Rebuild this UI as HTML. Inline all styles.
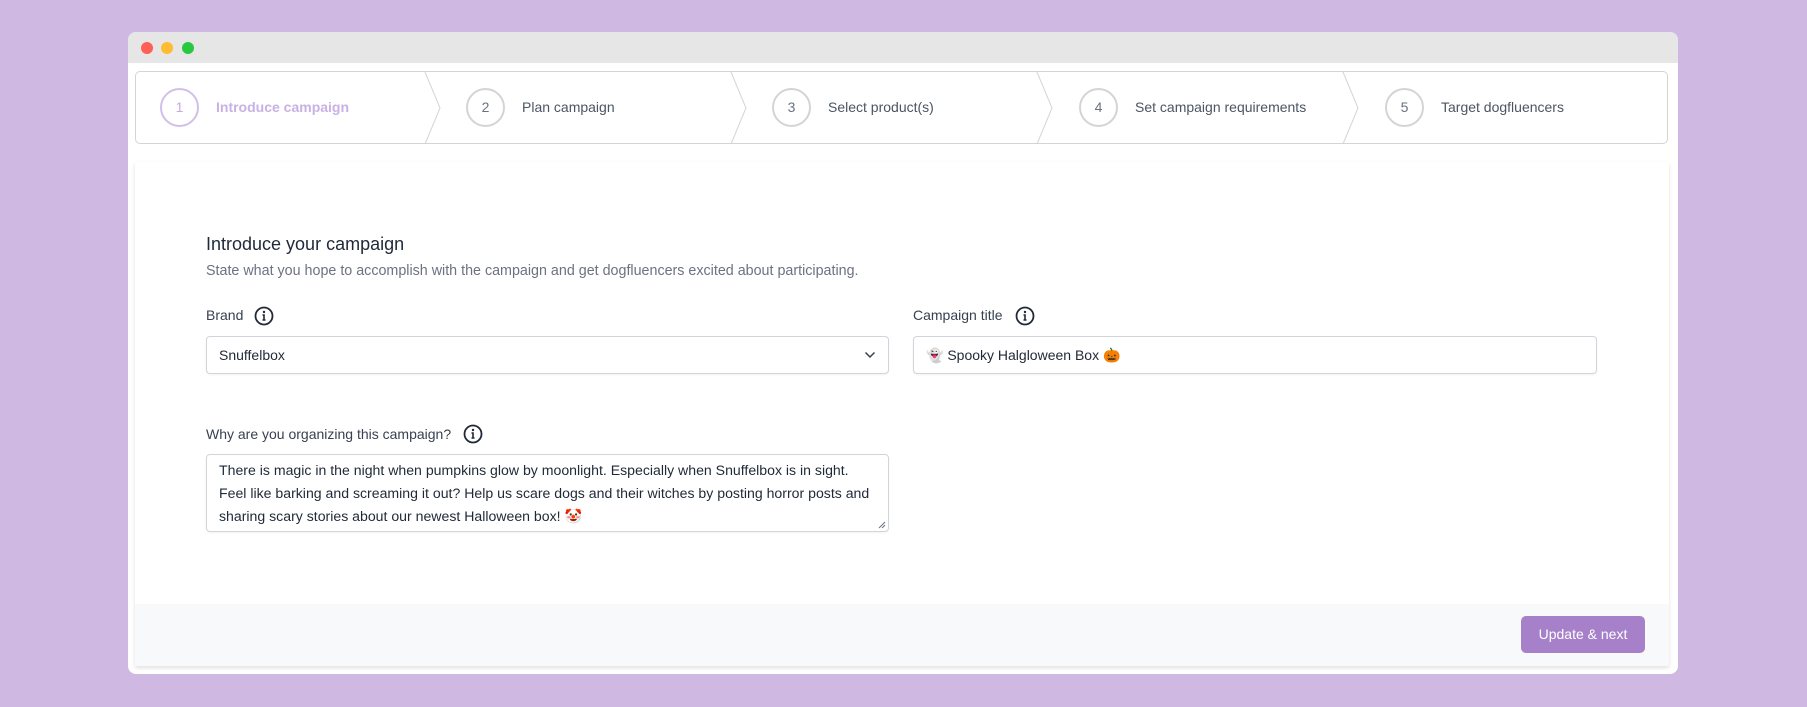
<!DOCTYPE html>
<html><head><meta charset="utf-8"><style>
*{box-sizing:border-box;margin:0;padding:0}
body{width:1807px;height:707px;background:#cfb9e3;font-family:"Liberation Sans",sans-serif;position:relative;overflow:hidden;color:#1f2937}
.win{position:absolute;left:128px;top:32px;width:1550px;height:642px;background:#fff;border-radius:8px;overflow:hidden}
.bar{position:absolute;left:0;top:0;width:100%;height:31px;background:#e6e6e6}
.dot{position:absolute;top:10px;width:12px;height:12px;border-radius:50%}
.steps{position:absolute;left:7px;top:39px;width:1533px;height:73px;border:1px solid #d4d4d8;border-radius:5px;background:#fff;overflow:hidden}
.step{position:absolute;top:0;height:71px}
.circ{position:absolute;top:16px;width:39px;height:39px;border:2px solid #d4d4d8;border-radius:50%;font-size:14px;color:#6b7280;text-align:center;line-height:35px}
.lab{position:absolute;top:27px;font-size:14px;color:#4b5563;white-space:nowrap}
.card{position:absolute;left:7px;top:130px;width:1534px;height:504px;background:#fff;box-shadow:0 2px 4px rgba(0,0,0,.12)}
.foot{position:absolute;left:0;bottom:0;width:100%;height:62px;background:#f8f9fb}
.t{position:absolute;white-space:nowrap}
.info{position:absolute;width:20px;height:20px}
.inp{position:absolute;border:1px solid #d1d5db;border-radius:4px;background:#fff;box-shadow:0 1px 2px rgba(0,0,0,.05);font-size:14px;color:#1f2937}
.btn{position:absolute;left:1386px;top:454px;width:124px;height:37px;background:#a680c9;border-radius:5px;color:#fff;font-size:14px;text-align:center;line-height:37px}
</style></head><body>
<div class="win">
<div class="bar"><div class="dot" style="left:13px;background:#fe5f57"></div><div class="dot" style="left:33px;background:#febc2e"></div><div class="dot" style="left:54px;background:#28c840"></div></div>
<div class="steps">
<svg width="1534" height="72" style="position:absolute;left:0;top:0" fill="none" stroke="#d4d4d8" stroke-width="1">
<path d="M289 0L304 36L289 72"/><path d="M595 0L610 36L595 72"/><path d="M901 0L916 36L901 72"/><path d="M1207 0L1222 36L1207 72"/>
</svg>
<div class="step" style="left:0"><div class="circ" style="left:24px;border-color:#d3bfe8;color:#c4abe0">1</div><div class="lab" style="left:80px;color:#c9b1e4;font-weight:bold">Introduce campaign</div></div>
<div class="step" style="left:306px"><div class="circ" style="left:24px">2</div><div class="lab" style="left:80px">Plan campaign</div></div>
<div class="step" style="left:612px"><div class="circ" style="left:24px">3</div><div class="lab" style="left:80px">Select product(s)</div></div>
<div class="step" style="left:919px"><div class="circ" style="left:24px">4</div><div class="lab" style="left:80px">Set campaign requirements</div></div>
<div class="step" style="left:1225px"><div class="circ" style="left:24px">5</div><div class="lab" style="left:80px">Target dogfluencers</div></div>
</div>
<div class="card">
<div class="t" style="left:71px;top:72px;font-size:18px;color:#1f2937">Introduce your campaign</div>
<div class="t" style="left:71px;top:101px;font-size:14.3px;color:#6b7280">State what you hope to accomplish with the campaign and get dogfluencers excited about participating.</div>
<div class="t" style="left:71px;top:145px;font-size:14px;color:#374151">Brand</div>
<svg class="info" style="left:119px;top:144px" viewBox="0 0 20 20"><circle cx="10" cy="10" r="8.5" fill="none" stroke="#1f2937" stroke-width="1.8"/><circle cx="10" cy="6" r="1.2" fill="#1f2937"/><path d="M8.5 9H10V14M8.5 14H11.5" stroke="#1f2937" stroke-width="1.6" fill="none"/></svg>
<div class="t" style="left:778px;top:145px;font-size:14px;color:#374151">Campaign title</div>
<svg class="info" style="left:880px;top:144px" viewBox="0 0 20 20"><circle cx="10" cy="10" r="8.5" fill="none" stroke="#1f2937" stroke-width="1.8"/><circle cx="10" cy="6" r="1.2" fill="#1f2937"/><path d="M8.5 9H10V14M8.5 14H11.5" stroke="#1f2937" stroke-width="1.6" fill="none"/></svg>
<div class="inp" style="left:71px;top:174px;width:683px;height:38px;padding:10px 12px">Snuffelbox
<svg style="position:absolute;right:12px;top:14px" width="12" height="8" viewBox="0 0 12 8"><path d="M1.5 1.5L6 6L10.5 1.5" stroke="#374151" stroke-width="1.5" fill="none"/></svg></div>
<div class="inp" style="left:778px;top:174px;width:684px;height:38px;padding:10px 12px">👻 Spooky Halgloween Box 🎃</div>
<div class="t" style="left:71px;top:264px;font-size:14px;color:#374151">Why are you organizing this campaign?</div>
<svg class="info" style="left:328px;top:262px" viewBox="0 0 20 20"><circle cx="10" cy="10" r="8.5" fill="none" stroke="#1f2937" stroke-width="1.8"/><circle cx="10" cy="6" r="1.2" fill="#1f2937"/><path d="M8.5 9H10V14M8.5 14H11.5" stroke="#1f2937" stroke-width="1.6" fill="none"/></svg>
<div class="inp" style="left:71px;top:292px;width:683px;height:78px;padding:4px 12px;line-height:23px;font-size:14.1px;white-space:nowrap">There is magic in the night when pumpkins glow by moonlight. Especially when Snuffelbox is in sight.<br>Feel like barking and screaming it out? Help us scare dogs and their witches by posting horror posts and<br>sharing scary stories about our newest Halloween box! 🤡
<svg style="position:absolute;right:2px;bottom:2px" width="8" height="8"><path d="M7 1L1 7M7 4L4 7" stroke="#6b7280"/></svg></div>
<div class="foot"></div>
<div class="btn">Update &amp; next</div>
</div>
</div>
</body></html>
